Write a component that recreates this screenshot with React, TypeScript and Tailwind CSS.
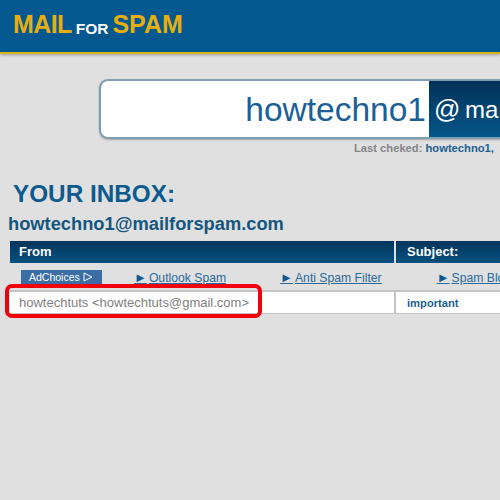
const FONT = "font-['Liberation_Sans',Arial,sans-serif]";

function AdLink({ label, className }: { label: string; className: string }) {
  return (
    <a className={`block shrink-0 text-[12.2px] leading-[16px] mt-[2px] text-[#2a6a9a] underline whitespace-nowrap ${className}`}>
      <span className="text-[#0f5a92] text-[13px] mr-[2px]">►</span>
      {label}
    </a>
  );
}

export default function App() {
  return (
    <div className={`relative w-[500px] h-[500px] overflow-hidden bg-[#e0e0e0] ${FONT}`}>
      {/* Header */}
      <header className="h-[54px] bg-[#03588f] border-b-[2px] border-[#d9b21c] shadow-[0_1px_3px_rgba(0,0,0,0.3)] flex items-start pl-[13px] pt-[8px]">
        <span className="text-[25px] leading-[32px] font-bold text-[#e8ae0c] tracking-[-0.6px]">MAIL</span>
        <span className="text-[15.5px] leading-[18px] mt-[12px] ml-[4px] mr-[4px] font-bold text-white">FOR</span>
        <span className="text-[25px] leading-[32px] font-bold text-[#e8ae0c]">SPAM</span>
      </header>

      {/* Address box */}
      <div className="ml-[99px] mt-[25px] w-[420px] h-[60px] flex rounded-l-[9px] border-2 border-r-0 border-[#7f9db3] bg-white overflow-hidden shadow-[0_1px_2px_rgba(0,0,0,0.25)]">
        <div className="w-[328px] shrink-0 text-right pr-[3px] text-[33.5px] leading-[58px] text-[#1a6096]">howtechno1</div>
        <div className="flex-1 bg-gradient-to-b from-[#033258] to-[#04568a] text-white pl-[5px] text-[24px] leading-[56px] whitespace-nowrap">
          <span className="text-[26px] mr-[-2px]">@</span> ma
        </div>
      </div>

      <div className="ml-[354px] mt-[3px] h-[15px] text-[11.2px] leading-[13px] font-bold text-[#85858a] whitespace-nowrap">
        Last cheked: <span className="text-[#1c5f92]">howtechno1,</span>
      </div>

      {/* Inbox */}
      <h1 className="ml-[13px] mt-[22px] text-[24.3px] leading-[30px] font-bold text-[#0d5a8e]">YOUR INBOX:</h1>
      <h2 className="ml-[8px] mt-[3px] text-[18.3px] leading-[24px] font-bold text-[#14567f] whitespace-nowrap">howtechno1@mailforspam.com</h2>

      {/* Table head */}
      <div className="ml-[10px] mt-[5px] flex gap-[2px] w-[490px] h-[22px] text-[13px] font-bold text-white leading-[22px]">
        <div className="w-[384px] shrink-0 pl-[9px] bg-gradient-to-b from-[#03355c] to-[#05507f]">From</div>
        <div className="flex-1 pl-[11px] bg-gradient-to-b from-[#03355c] to-[#05507f]">Subject:</div>
      </div>

      {/* Ad row */}
      <div className="ml-[21px] mt-[5px] h-[22px] flex items-start w-[479px]">
        <div className="w-[81px] h-[14px] mt-[2px] shrink-0 bg-[#3a6ea5] text-white text-[10.5px] leading-[14px] pl-[8px] flex items-center">
          AdChoices
          <svg className="ml-[3px]" width="10" height="10" viewBox="0 0 10 10" fill="none" stroke="white" strokeWidth="1">
            <path d="M1 1 L9 5 L1 9 Z" />
          </svg>
        </div>
        <AdLink label="Outlook Spam" className="ml-[32px]" />
        <AdLink label="Anti Spam Filter" className="ml-[54px]" />
        <AdLink label="Spam Blo" className="ml-[55px]" />
      </div>

      {/* Message row */}
      <div className="ml-[10px] flex gap-[2px] w-[490px] h-[24px] bg-[#c4c4c4] pt-[2px] pb-[1px]">
        <div className="w-[384px] shrink-0 bg-white pl-[9px] text-[13px] leading-[22px] text-[#808080] whitespace-nowrap">
          howtechtuts &lt;howtechtuts@gmail.com&gt;
        </div>
        <div className="flex-1 bg-white pl-[11px] text-[11.2px] leading-[22px] font-bold text-[#1c5f92]">important</div>
      </div>

      {/* Red highlight annotation */}
      <div className="absolute left-[5px] top-[284px] w-[257px] h-[34px] border-[4px] border-[#f00008] rounded-[7px]" />
    </div>
  );
}
